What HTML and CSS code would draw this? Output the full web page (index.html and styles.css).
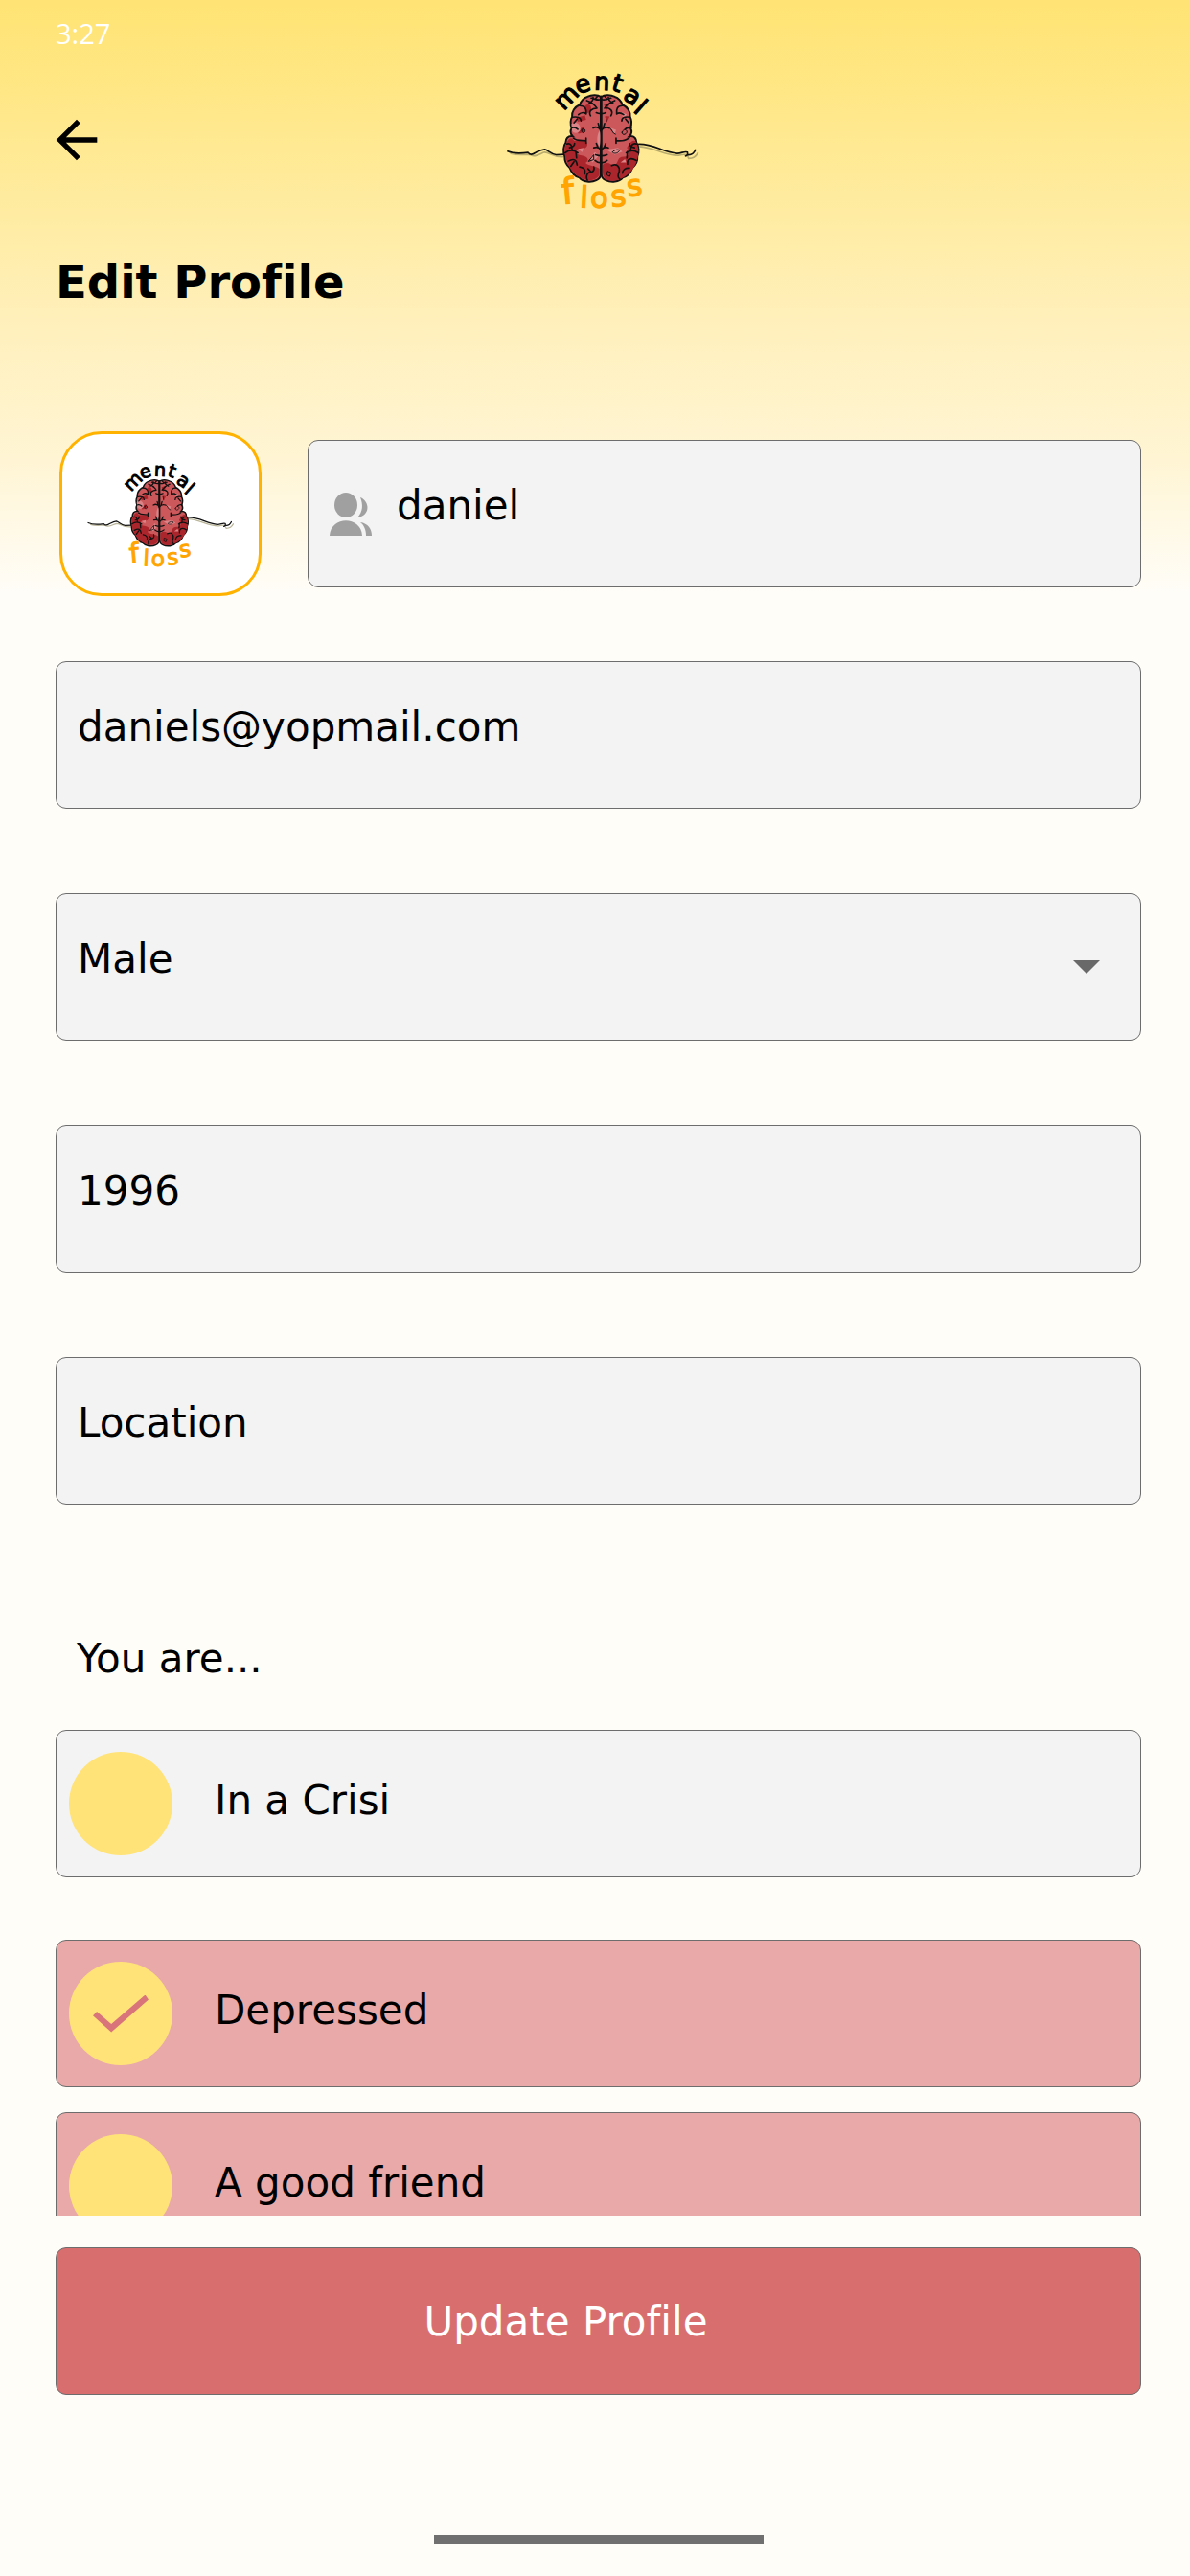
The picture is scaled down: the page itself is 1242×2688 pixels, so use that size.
FILE: index.html
```html
<!DOCTYPE html>
<html lang="en">
<head>
    <meta charset="UTF-8">
    <meta name="viewport" content="width=device-width, initial-scale=1.0">
    <title>Mental Floss - Edit Profile</title>
    <link rel="stylesheet" href="styles.css">
</head>
<body>

    <!-- logo, shared by the header and the avatar -->
    <svg class="sprite" aria-hidden="true">
        <symbol id="logo" viewBox="80 65 615 445">
            <g fill="none" stroke-linecap="round" stroke-linejoin="round">
                <path stroke="#8a8355" stroke-opacity=".6" stroke-width="5" d="M98 330 C120 337 140 332 158 334 C172 345 190 330 204 326 C222 326 228 343 265 340 M500 308 C550 310 580 338 625 336 C640 332 652 330 656 346 C672 346 680 338 685 328"/>
                <path stroke="#111" stroke-width="5" d="M88 323 C108 332 130 330 152 327 C158 335 166 334 174 328 C184 323 192 318 204 317 C216 320 222 332 240 334 L266 333 M496 301 C545 298 575 327 620 330 C634 330 642 322 652 326 C654 334 650 338 646 338 M652 334 C666 336 672 330 677 319"/>
            </g>
            <path id="half" fill="#cd585b" stroke="#111" stroke-width="6" d="M380 152 C370 144 350 146 338 152 C325 156 318 166 314 177 C298 184 288 200 290 215 C284 226 285 240 289 250 C283 260 286 270 292 276 C276 274 270 284 270 296 C262 306 261 325 267 339 C266 356 274 368 283 375 C288 390 300 402 313 406 C324 420 350 422 366 414 C376 410 380 402 380 394 Z"/>
            <use href="#half" transform="translate(762 0) scale(-1 1)"/>
            <g fill="#aa262c">
                <path d="M272 298 C280 280 290 278 296 290 L334 292 C346 306 330 318 312 316 C296 320 300 334 320 336 C340 340 346 350 332 360 C344 372 360 366 376 378 L376 396 C370 414 340 420 320 408 C300 398 280 380 272 350 C264 330 266 310 272 298 Z"/>
                <path d="M490 292 C500 310 500 335 494 350 C486 385 450 416 415 416 C395 416 386 402 386 388 L386 366 C400 352 412 366 424 368 C440 350 430 342 452 340 C476 340 470 320 462 312 C470 300 478 284 490 292 Z"/>
                <path d="M330 180 C345 170 352 180 350 196 L334 206 Z M390 176 L410 170 L398 196 Z M304 218 L330 210 L334 224 L308 230 Z M394 212 L408 214 L398 234 Z M306 256 L326 246 L332 262 L310 268 Z"/>
            </g>
            <g fill="#db8588">
                <path d="M288 238 C300 224 318 238 316 256 C310 268 296 268 290 260 Z M374 262 C382 250 382 300 376 308 C366 296 368 276 374 262 Z"/>
                <path d="M346 346 L362 326 L374 338 L354 358 Z M398 318 L434 312 L448 324 L424 334 Z M412 250 L428 256 L424 270 Z M446 200 L462 208 L450 220 Z M308 316 L326 312 L322 326 Z M442 358 L456 348 L460 358 Z"/>
            </g>
            <g fill="none" stroke="#111" stroke-width="5" stroke-linecap="round" stroke-linejoin="round">
                <path d="M381 150 V396"/>
                <path d="M380 160 C370 166 362 158 350 156 M362 160 L370 150 M336 164 C350 168 360 176 368 188 M344 172 C352 168 358 160 356 154 M314 180 C330 180 336 190 334 206 M334 206 C326 200 316 202 310 208 M368 188 C352 188 340 198 348 212 M292 216 C306 214 318 216 318 228 M306 222 L296 234 M288 250 C298 246 304 250 308 254"/>
                <path d="M382 160 C392 166 398 158 412 156 M400 160 L392 150 M424 164 C412 168 402 176 392 188 M418 172 C410 168 404 160 404 154 M448 180 C432 180 428 190 430 206 M430 206 C438 200 444 202 452 208 M394 186 C412 188 420 198 412 212 M472 216 C456 214 446 216 446 228 M458 222 L468 234 M476 250 C464 246 460 250 456 254"/>
                <path d="M366 202 C372 206 390 206 396 202 M356 250 C366 244 376 250 381 258 C388 248 396 246 406 250 M372 236 L376 250 M392 236 L388 250 M294 282 C306 292 320 288 334 290 M334 282 V298 M430 290 C446 290 458 292 470 280 M428 282 V298"/>
                <path d="M358 312 C370 308 378 314 381 320 C386 312 394 308 404 312 M366 298 L372 312 M396 298 L390 312 M364 334 C374 338 390 338 400 334 M362 352 C372 362 390 362 400 352 M274 300 C286 296 290 306 290 318 M282 312 C292 310 298 306 298 298 M268 328 C284 316 300 322 308 328 M302 324 L304 344 M278 354 C296 344 304 350 306 366 M296 356 L286 370"/>
                <path d="M492 300 C480 296 474 306 474 318 M486 312 C474 310 470 306 470 298 M498 328 C480 316 468 322 460 328 M464 324 L462 344 M492 352 C470 340 462 350 464 364 M314 372 C326 374 334 380 330 394 M340 378 L348 386 M358 372 C362 384 354 390 342 390 C334 396 334 408 338 414 M414 368 C430 360 440 370 438 386 C432 398 434 408 440 410 M470 376 C458 374 448 382 448 392"/>
                <path stroke-width="3" d="M318 258 C322 248 334 252 330 262 C324 268 318 264 322 256 M446 264 C450 252 464 254 462 264 C456 274 444 272 448 262 M408 250 C416 254 416 268 426 270 M416 326 C424 316 440 316 438 322 C432 332 420 330 418 328 M342 354 L358 334 L358 348 Z M402 386 L412 390 L408 402 L400 398 Z M396 216 L398 228"/>
            </g>
            <text class="logo-top" x="264 307 359 411 447 480" y="197 143 130 130 157 197" rotate="-46 -15 2 18 34 41">mental</text>
            <text class="logo-bottom" x="260 313 347 414 466" y="489 499 501 497 466" rotate="-5 3 0 -5 -8"><tspan class="logo-f">f</tspan>loss</text>
        </symbol>
    </svg>

    <div class="status-bar">3:27</div>

    <header class="header">
        <button class="back-button" type="button" aria-label="Back">
            <svg viewBox="0 0 24 24"><path d="M20 11H7.83l5.59-5.59L12 4l-8 8 8 8 1.41-1.41L7.83 13H20v-2z"/></svg>
        </button>
        <svg class="logo" role="img" aria-label="mental floss"><use href="#logo"/></svg>
    </header>

    <h1 class="title">Edit Profile</h1>

    <form class="profile-form" id="profileForm">
        <div class="profile-row">
            <button class="avatar" type="button" aria-label="Change picture">
                <svg><use href="#logo"/></svg>
            </button>
            <div class="field icon-field">
                <svg class="field-icon" viewBox="0 0 44 45" aria-hidden="true">
                    <ellipse cx="17" cy="13" rx="12" ry="13"/>
                    <path d="M32 5 C42 9 43 24 29 26 C35 20 35 12 32 5 Z"/>
                    <path d="M0 45 C1 24 33 24 34 45 Z"/>
                    <path d="M32 31 C40 32 44 38 44 45 H38 C38 39 36 34 32 31 Z"/>
                </svg>
                <input type="text" name="name" aria-label="Name" value="daniel">
            </div>
        </div>

        <div class="fields">
            <div class="field">
                <input type="email" name="email" aria-label="Email" value="daniels@yopmail.com">
            </div>
            <div class="field">
                <select name="gender" aria-label="Gender">
                    <option selected>Male</option>
                    <option>Female</option>
                </select>
                <svg class="arrow" viewBox="0 0 28 14" aria-hidden="true"><path d="M0 0h28L14 14z"/></svg>
            </div>
            <div class="field">
                <input type="text" name="year" aria-label="Year of birth" value="1996">
            </div>
            <div class="field">
                <input type="text" name="location" aria-label="Location" placeholder="Location">
            </div>
        </div>

        <h2 class="subtitle">You are...</h2>

        <div class="option">
            <input type="checkbox" id="crisis" name="crisis">
            <label for="crisis">In a Crisi</label>
        </div>
        <div class="option-group">
            <div class="option selected">
                <input type="checkbox" id="depressed" name="depressed" checked>
                <label for="depressed">Depressed</label>
            </div>
            <div class="option selected">
                <input type="checkbox" id="friend" name="friend">
                <label for="friend">A good friend</label>
            </div>
        </div>
    </form>

    <footer class="footer">
        <button class="update-button" type="submit" form="profileForm">Update Profile</button>
        <div class="home-bar"></div>
    </footer>

</body>
</html>
```
FILE: styles.css
```css
* {
    box-sizing: border-box;
}
body {
    display: flex;
    flex-direction: column;
    height: 100vh;
    margin: 0;
    font-family: "DejaVu Sans", sans-serif;
    font-size: 42px;
    font-variant-ligatures: none;
    color: #000;
    background: #fffdf8 linear-gradient(#ffe374 0, #ffe680 70px, #fff0bc 340px, #fff5d4 480px, #fffdf8 620px) no-repeat;
}
button, input, select {
    font: inherit;
    font-variant-ligatures: none;
    color: inherit;
}
.sprite {
    position: absolute;
    width: 0;
    height: 0;
}
.status-bar {
    flex: none;
    height: 72px;
    padding: 0 58px;
    line-height: 70px;
    font-family: "Open Sans", sans-serif;
    font-size: 29px;
    color: #fff;
}
.header {
    flex: none;
    display: grid;
    grid-template-columns: 1fr auto 1fr;
    align-items: center;
    padding: 0 32px 0 48px;
}
.back-button {
    width: 64px;
    height: 64px;
    padding: 0;
    border: none;
    background: none;
    cursor: pointer;
}
.back-button svg {
    display: block;
}
.logo {
    width: 205px;
    height: 148px;
}
.logo-top {
    font-size: 76px;
    fill: #000;
    stroke: #000;
    stroke-width: 4px;
}
.logo-bottom {
    font-size: 92px;
    fill: #ffa400;
    stroke: #ffa400;
    stroke-width: 4px;
}
.logo-f {
    font-size: 112px;
}
.title {
    flex: none;
    margin: 44px 0 0;
    padding: 0 58px;
    font-size: 48px;
    line-height: 60px;
}
.profile-form {
    flex: 1;
    min-height: 0;
    margin-top: 126px;
    padding: 0 51px 0 58px;
    overflow-y: auto;
    scrollbar-width: none;
}
.profile-row {
    display: flex;
    align-items: center;
    gap: 48px;
    padding-left: 4px;
    margin-bottom: 68px;
}
.profile-row .field {
    flex: 1;
}
.avatar {
    display: flex;
    align-items: center;
    justify-content: center;
    width: 211px;
    height: 172px;
    padding: 0;
    border: 3px solid #ffb300;
    border-radius: 44px;
    background: #fff;
    cursor: pointer;
}
.avatar svg {
    width: 156px;
    height: 113px;
}
.fields {
    display: flex;
    flex-direction: column;
    gap: 88px;
}
.field {
    display: flex;
    align-items: center;
    height: 154px;
    border: 1px solid #6d6d6d;
    border-radius: 11px;
    background: #f3f3f3;
}
.icon-field {
    gap: 4px;
}
.field input, .field select {
    flex: 1;
    min-width: 0;
    height: 100%;
    padding: 0 22px 18px;
    border: none;
    outline: none;
    background: none;
    appearance: none;
}
.field input::placeholder {
    color: #000;
    opacity: 1;
}
.field-icon {
    width: 44px;
    height: 45px;
    margin-left: 22px;
    fill: #a0a0a0;
}
.arrow {
    width: 28px;
    height: 14px;
    margin-right: 42px;
    fill: #696969;
}
.subtitle {
    margin: 137px 0 50px;
    padding: 0 22px;
    font-size: 42px;
    font-weight: normal;
    line-height: 48px;
}
.option {
    display: flex;
    align-items: center;
    gap: 44px;
    height: 154px;
    padding: 0 13px;
    border: 1px solid #6d6d6d;
    border-radius: 11px;
    background: #f3f3f3;
}
.option.selected {
    background: #e9a9a9;
}
.option input {
    display: grid;
    place-items: center;
    width: 108px;
    height: 108px;
    margin: 0;
    border-radius: 50%;
    background: #ffe378;
    appearance: none;
    cursor: pointer;
}
.option input:checked::before {
    content: "";
    width: 58px;
    height: 39px;
    background: #d9757a;
    clip-path: polygon(94% 0, 100% 13%, 33% 100%, 0 56%, 7% 45%, 33% 78%);
}
.option label {
    flex: 1;
    padding-bottom: 8px;
}
.option-group {
    display: flex;
    flex-direction: column;
    gap: 26px;
    margin-top: 65px;
}
.footer {
    flex: none;
    padding: 33px 51px 33px 58px;
}
.update-button {
    display: block;
    width: 100%;
    height: 154px;
    padding: 0 68px 0 0;
    border: 1px solid #6d6d6d;
    border-radius: 11px;
    background: #d96e6f;
    color: #fff;
    cursor: pointer;
}
.home-bar {
    width: 344px;
    height: 10px;
    margin: 146px auto 0;
    background: #707070;
}
```
